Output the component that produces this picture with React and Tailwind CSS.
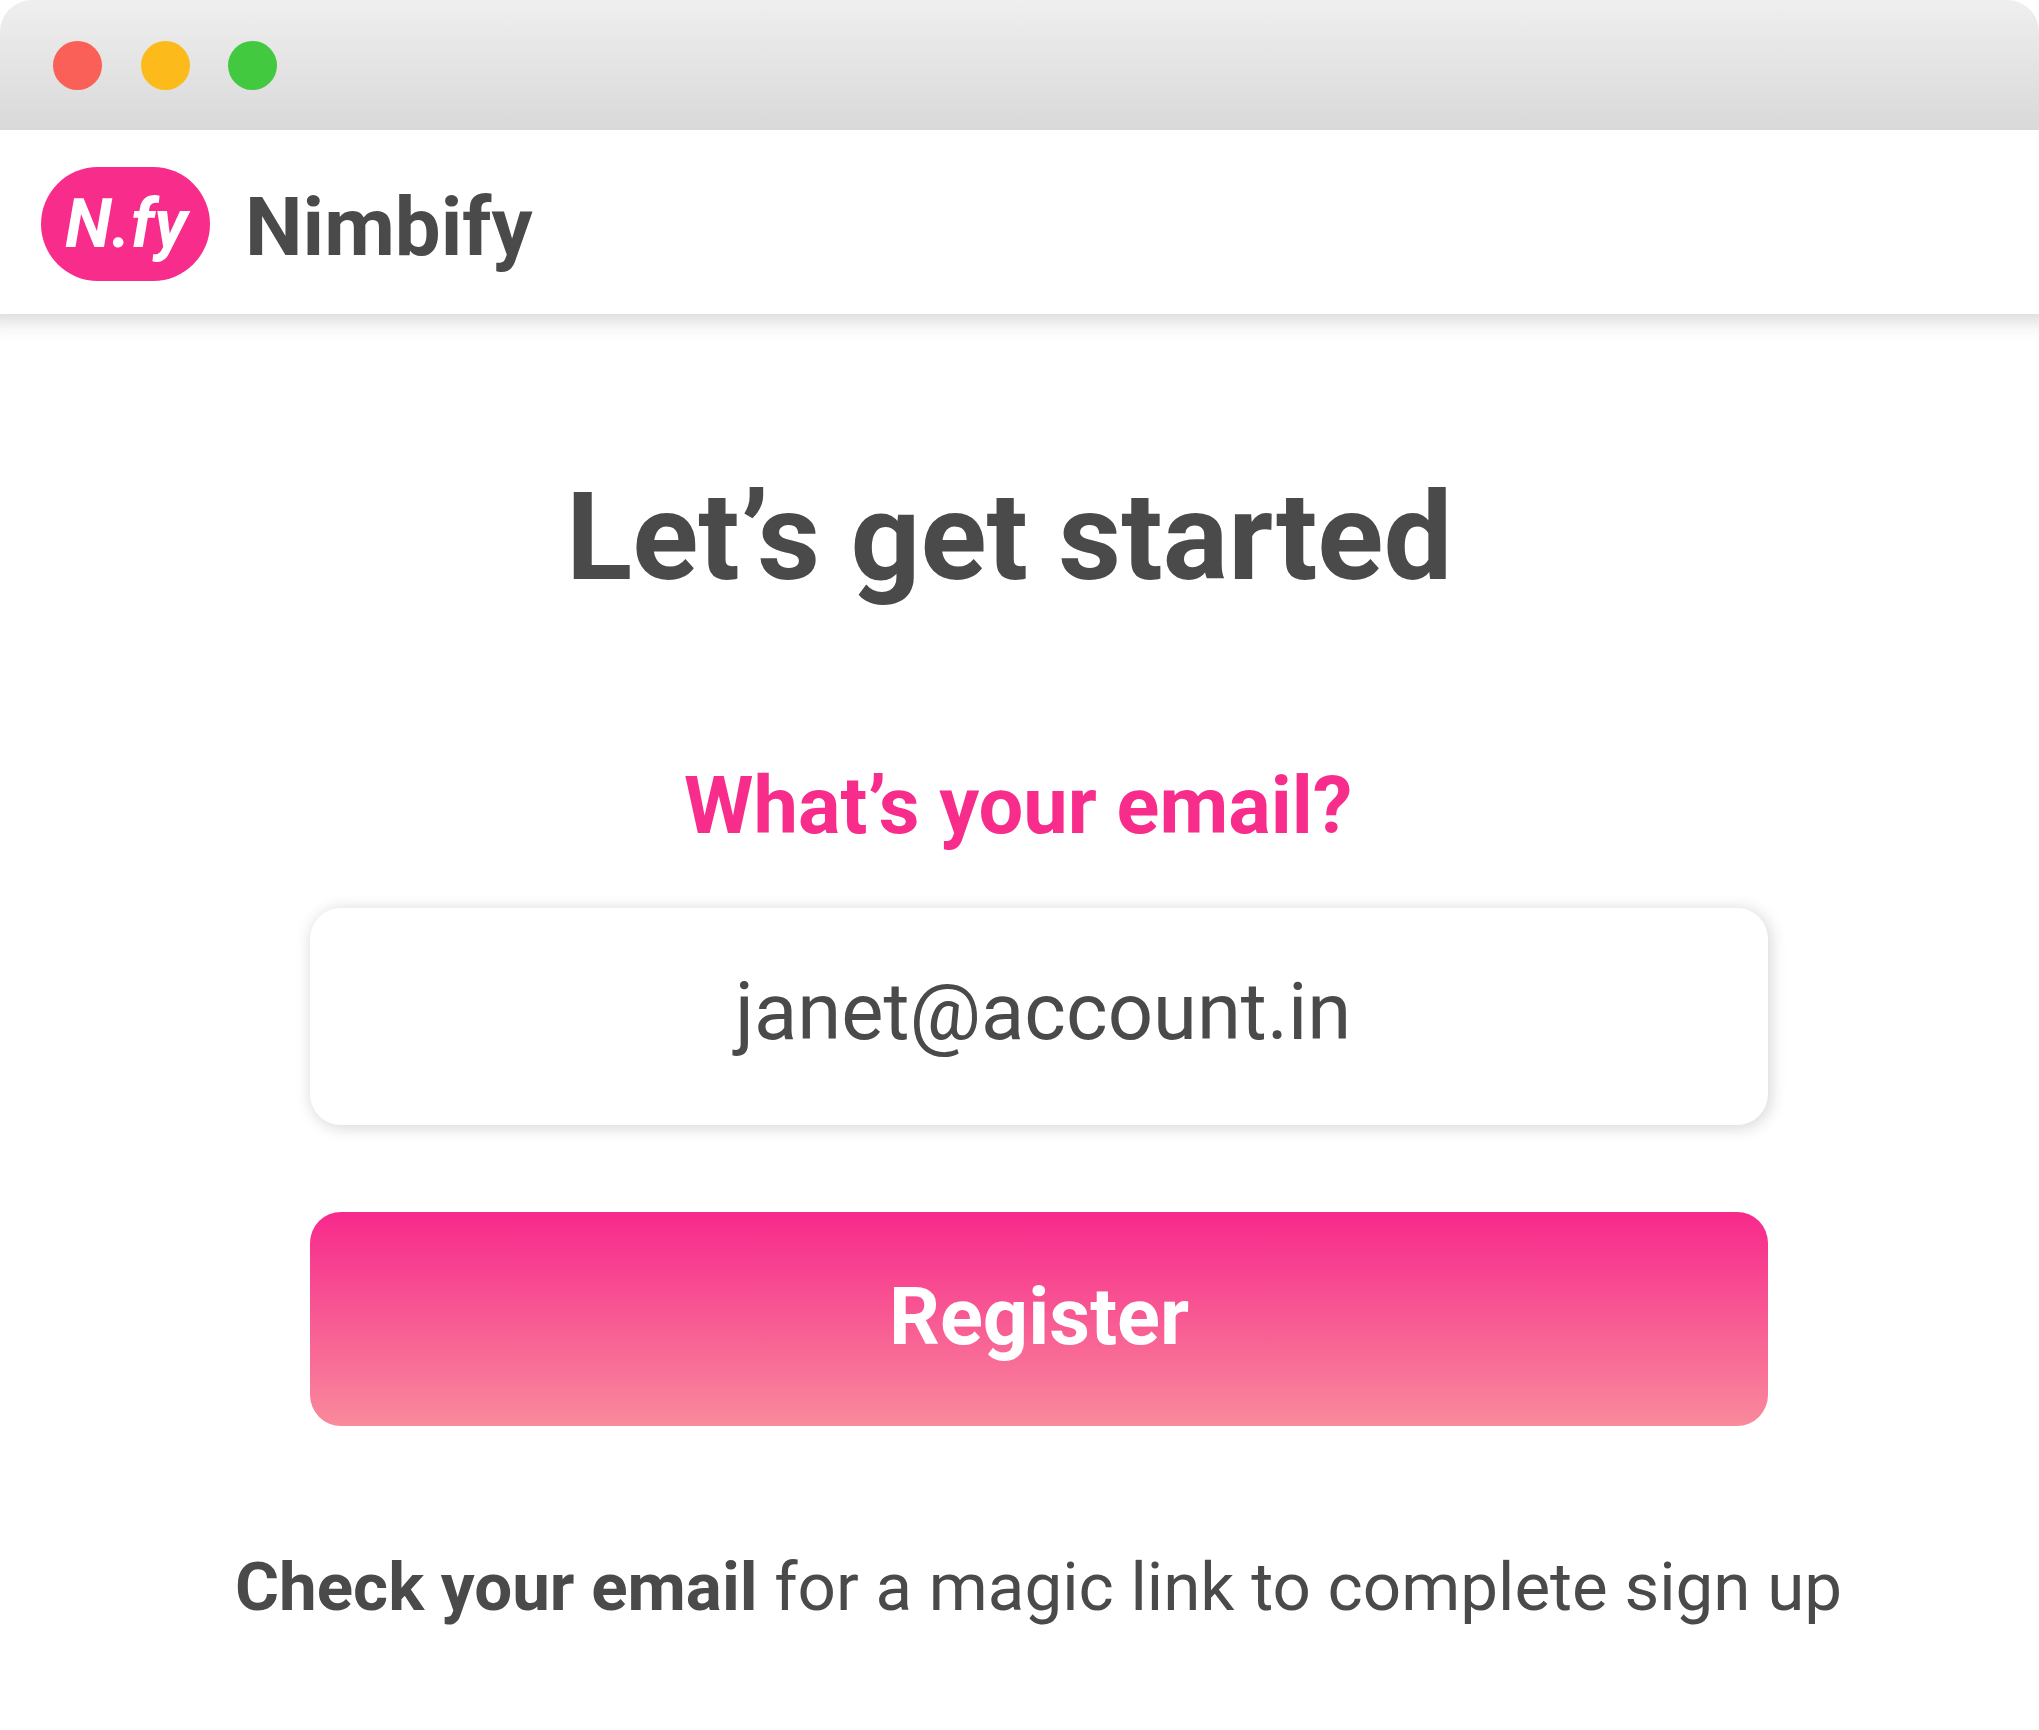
const WindowBar = () => (
  <div className="relative z-10 flex h-[130px] items-center gap-[38.7px] rounded-t-[32px] bg-linear-to-b/srgb from-[#efefef] to-[#d9d9d9] pl-[53px]">
    <span className="size-[49px] rounded-full bg-[#fa6057]" />
    <span className="size-[49px] rounded-full bg-[#fdbb1b]" />
    <span className="size-[49px] rounded-full bg-[#42c940]" />
  </div>
);

const Header = () => (
  <header className="flex h-[184px] items-start bg-white pl-[41px] shadow-[0_-10px_20px_16px_rgba(0,0,0,0.17)]">
    <div className="mt-[37px] h-[114px] w-[169px] rounded-full bg-[#f72c8b] pt-[24px] pl-[24px]">
      <span className="block text-[68px] leading-[67px] font-bold whitespace-nowrap text-white italic">
        N.fy
      </span>
    </div>
    <span className="mt-[56px] ml-[35px] text-[81.6px] leading-[82px] font-bold">Nimbify</span>
  </header>
);

const SignUpForm = () => (
  <main className="flex flex-col items-start pt-[162px]">
    <h1 className="ml-[566px] text-[122.4px] leading-[122px] font-bold whitespace-nowrap">
      Let’s get started
    </h1>
    <label htmlFor="email" className="mt-[168px] ml-[684px] text-[79.4px] leading-[80px] font-bold whitespace-nowrap text-[#f72c8b]">
      What’s your email?
    </label>

    <div
      id="email"
      className="mt-[62px] ml-[310px] h-[217px] w-[1458px] rounded-[31px] bg-white pt-[64px] pl-[425px] text-[79.6px] leading-[80px] whitespace-nowrap shadow-[2px_2px_16px_1px_rgba(0,0,0,0.16)]"
    >
      janet@account.in
    </div>

    <button
      type="button"
      className="mt-[87px] ml-[310px] flex h-[214px] w-[1458px] items-start rounded-[31px] bg-linear-to-b/srgb from-[#f7298c] to-[#f98a9b] pt-[65px] pl-[579px] text-[79.5px] leading-[80px] font-bold text-white"
    >
      Register
    </button>

    <p className="mt-[127px] ml-[235px] text-[67.3px] leading-[68px] whitespace-nowrap">
      <strong className="font-bold">Check your email</strong> for a magic link to complete sign up
    </p>
  </main>
);

const App = () => {
  return (
    <div className="h-[1730px] w-[2039px] overflow-hidden bg-white font-[Roboto,sans-serif] text-[#4a4a4a]">
      <WindowBar />
      <Header />
      <SignUpForm />
    </div>
  );
};

export default App;
